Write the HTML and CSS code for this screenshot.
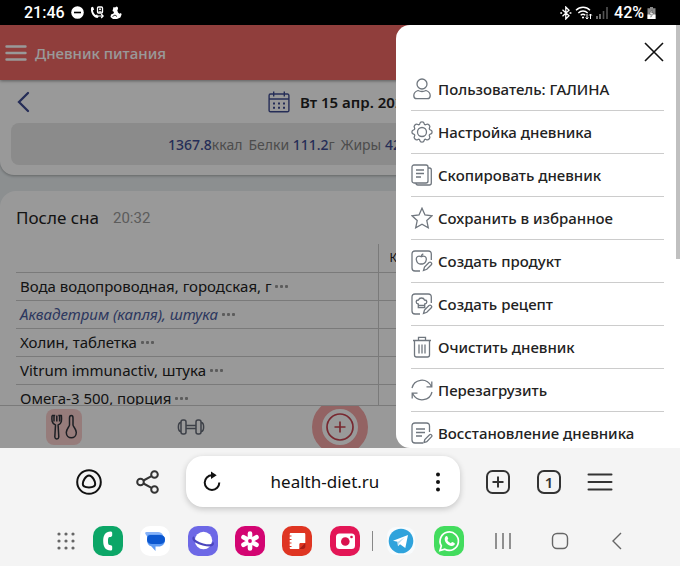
FILE: index.html
```html
<!DOCTYPE html>
<html lang="ru">
  <head>
    <meta charset="UTF-8" />
    <meta name="viewport" content="width=device-width, initial-scale=1.0" />
    <title>Дневник питания</title>
    <link rel="stylesheet" href="styles.css">
  </head>
  <body>
    <div class="status-bar">
      <div class="status-group">
        <span>21:46</span>
        <svg width="13" height="13" viewBox="0 0 13 13"><circle cx="6.500" cy="6.500" r="6.300" fill="#fff" /><path d="M3 6.500h7" stroke="#000" stroke-width="1.600" /></svg>
        <svg width="14" height="13" viewBox="0 0 14 13"><path d="M1.300 1.200 3 .7l1.200 2.700-1.300 1.200c.4 1.800 1.200 3.200 2.600 4.400l1.600-.6 1.600 2.300-1.200 1.400C3.300 11.700-.2 6 1.300 1.200z" fill="#fff" /><rect x="7.500" y="1" width="5" height="6" rx="1" fill="none" stroke="#fff" stroke-width="1.300" /><circle cx="10" cy="3.300" r="1" fill="#fff" /><path d="M8.500 5.800h3M8 10h5M11.200 8l2 2-2 2" fill="none" stroke="#fff" stroke-width="1.200" /></svg>
        <svg width="12" height="13" viewBox="0 0 12 13"><path d="M3.500 1 5 1.500 6.500.5C8.300.8 8.500 3 7.300 4.300L8 6.500l1.500 1.300L11 7l.6 1.500-1.200 3L7 13H3L.5 11 1 8.500l2.500-1L4 6 2.500 5z" fill="#fff" /><path d="M2.500 10.500 5 9l2 1.500" fill="none" stroke="#000" stroke-width=".8" /></svg>
      </div>
      <div class="status-group status-right">
        <svg width="12" height="14" viewBox="0 0 12 14"><path d="M2.500 3.800l6.500 6L5.800 13V1L9 4.200l-6.500 6M.3 7h1.800M9.600 7h1.800" fill="none" stroke="#fff" stroke-width="1.300" /></svg>
        <svg width="18" height="14" viewBox="0 0 18 14"><path d="M1 4.300c4-4 10.200-4 14 0M3.300 6.900c2.700-2.600 6.700-2.600 9.400 0M5.700 9.300c1.400-1.200 3.200-1.200 4.600 0" fill="none" stroke="#fff" stroke-width="1.400" /><circle cx="8" cy="11.500" r="1.100" fill="#fff" /><path d="M12 8v5M10.700 11.500 12 13l1.300-1.500M15.500 13V8M14.200 9.500 15.500 8l1.300 1.500" fill="none" stroke="#fff" stroke-width="1" /></svg>
        <svg width="12" height="12" viewBox="0 0 12 12"><path d="M1 9v3M4 7v5" stroke="#888" stroke-width="1.600" /><path d="M7.500 4v8M11 0v12" stroke="#555" stroke-width="1.600" /></svg>
        <span class="battery-value">42%</span>
        <svg width="9" height="12" viewBox="0 0 9 12"><path d="M3 0h3v1.200h2.500V12h-8V1.200H3z" fill="#888" /><path d="M.5 7.500h8V12h-8z" fill="#fff" /><path d="M5 2.800 2.300 7h2L3.800 10.200 6.700 6h-2z" fill="#fff" stroke="#333" stroke-width=".4" /></svg>
      </div>
    </div>

    <main class="app">
      <header class="app-header">
        <button class="icon-button" aria-label="Меню">
          <svg width="22" height="18" viewBox="0 0 22 18"><path d="M1.500 2.500h19M1.500 9h19M1.500 15.500h19" stroke="#fff" stroke-width="2.400" stroke-linecap="round" /></svg>
        </button>
        <h1>Дневник питания</h1>
      </header>

      <section class="day-card">
        <div class="day-row">
          <button class="icon-button day-prev" aria-label="Предыдущий день">
            <svg width="14" height="22" viewBox="0 0 14 22"><path d="M12 2 3 11l9 9" fill="none" stroke="#3f4c92" stroke-width="2.300" stroke-linecap="round" /></svg>
          </button>
          <button class="icon-button day-current">
            <svg width="22" height="22" viewBox="0 0 22 22"><path d="M2.500 3h17a1.400 1.400 0 0 1 1.400 1.400v15a1.400 1.400 0 0 1-1.400 1.400h-17a1.400 1.400 0 0 1-1.400-1.400v-15A1.400 1.400 0 0 1 2.500 3zM1 8h20M5.700.5v5M16.300.5v5" fill="none" stroke="#3f4c92" stroke-width="1.400" /><path d="M5 12.500h2m3 0h2m3 0h2M5 16.700h2m3 0h2m3 0h2" stroke="#3f4c92" stroke-width="1.900" /></svg>
            <span>Вт 15 апр. 2025</span>
          </button>
        </div>
        <p class="summary">
          <span><b>1367.8</b>ккал</span>
          <span>Белки <b>111.2</b>г</span>
          <span>Жиры <b>42</b>г</span>
        </p>
      </section>

      <section class="meal-card">
        <div class="meal-head">
          <h2>После сна</h2>
          <time>20:32</time>
        </div>
        <table class="foods">
          <thead>
            <tr><th></th><th class="value">Ккал</th></tr>
          </thead>
          <tbody>
            <tr><td>Вода водопроводная, городская, г <button class="more" aria-label="Ещё"><i></i><i></i><i></i></button></td><td></td></tr>
            <tr><td><em>Аквадетрим (капля), штука</em> <button class="more" aria-label="Ещё"><i></i><i></i><i></i></button></td><td></td></tr>
            <tr><td>Холин, таблетка <button class="more" aria-label="Ещё"><i></i><i></i><i></i></button></td><td></td></tr>
            <tr><td>Vitrum immunactiv, штука <button class="more" aria-label="Ещё"><i></i><i></i><i></i></button></td><td></td></tr>
            <tr><td>Омега-3 500, порция <button class="more" aria-label="Ещё"><i></i><i></i><i></i></button></td><td></td></tr>
          </tbody>
        </table>
      </section>

      <nav class="tabs">
        <button class="tab" aria-label="Питание">
          <span class="tab-active">
            <svg width="28" height="28" viewBox="0 0 28 28" fill="none" stroke="#30343c" stroke-width="1.500" stroke-linejoin="round"><path d="M2 2.500h2v6M2 2.500c-.4 5-.3 8 3.500 9.500l-.7 12c.3 2.500 3.700 2.500 4 0l-.7-12c3.800-1.500 3.700-4.500 3.300-9.500H9.600v6M6.800 2.500v6M4 2.500h1.200M8.300 2.500h1.300" /><path d="M19.500 12V5c0-3.200 3.500-3.200 3.500 0v7c0 1.500 3.300 4 3.300 7.500 0 7-10 7-10 0 0-3.500 3.200-6 3.200-7.500z" /></svg>
          </span>
        </button>
        <button class="tab" aria-label="Тренировки">
          <svg width="28" height="18" viewBox="0 0 28 18" fill="none" stroke="#666c78" stroke-width="1.500"><rect x="4" y="2" width="5" height="14" rx="2" /><rect x="19" y="2" width="5" height="14" rx="2" /><path d="M4 4.500c-3.500 0-3.500 9 0 9M24 4.500c3.500 0 3.500 9 0 9M9 7.500h10M9 10.500h10" /></svg>
        </button>
        <button class="tab tab-center" aria-label="Добавить">
          <span class="tab-add">
            <svg width="28" height="28" viewBox="0 0 28 28" fill="none" stroke="#c84450" stroke-width="1.700"><circle cx="14" cy="14" r="13" /><path d="M14 8.500v11M8.500 14h11" /></svg>
          </span>
        </button>
        <span class="tab"></span>
        <span class="tab"></span>
      </nav>

      <div class="overlay"></div>

      <aside class="drawer">
        <div class="drawer-head">
          <button class="icon-button" aria-label="Закрыть">
            <svg width="20" height="20" viewBox="0 0 20 20"><path d="M1 1l18 18M19 1 1 19" stroke="#111" stroke-width="1.600" /></svg>
          </button>
        </div>
        <ul class="menu">
          <li><button>
            <svg viewBox="0 0 22 22"><circle cx="11" cy="6" r="5" /><path d="M7 12.500c-2.600.8-4.200 2.700-4.200 5.200 0 2 1.200 3 3 3h10.400c1.800 0 3-1 3-3 0-2.500-1.600-4.400-4.200-5.200-2.600 1.300-5.400 1.300-8 0z" /></svg>
            Пользователь: ГАЛИНА</button></li>
          <li><button>
            <svg viewBox="0 0 22 22"><circle cx="11" cy="11" r="4.500" /><path d="M8.800 2.700C9.200.3 12.800.3 13.200 2.700c.2 1 1 1.300 1.900.8 2.100-1.300 4.700 1.300 3.400 3.400-.5.900-.2 1.700.8 1.900 2.400.4 2.400 4 0 4.400-1 .2-1.300 1-.8 1.900 1.300 2.100-1.300 4.700-3.400 3.400-.9-.5-1.700-.2-1.900.8-.4 2.400-4 2.400-4.400 0-.2-1-1-1.300-1.900-.8-2.100 1.300-4.700-1.300-3.400-3.400.5-.9.200-1.700-.8-1.900-2.400-.4-2.400-4 0-4.400 1-.2 1.300-1 .8-1.900C2.200 4.800 4.800 2.200 6.900 3.500c.9.500 1.700.2 1.900-.8z" /></svg>
            Настройка дневника</button></li>
          <li><button>
            <svg viewBox="0 0 22 22"><rect x="1" y="1" width="16" height="18" rx="2" /><path d="M17 4h1.500C19.600 4 20.300 4.700 20.300 6v13c0 1.200-.7 2-2 2H7c-1.300 0-2-.7-2-2M5 6h8M5 9.500h8M5 13h5" /></svg>
            Скопировать дневник</button></li>
          <li><button>
            <svg viewBox="0 0 22 22"><path d="M11 1.200l3 6.800 7 .8-5.200 4.800 1.500 7.200L11 17.300l-6.300 3.500 1.500-7.200L1 8.800 8 8z" /></svg>
            Сохранить в избранное</button></li>
          <li><button>
            <svg viewBox="0 0 22 22"><path d="M20.300 10V4c0-2-1-3-3-3H4C2 1 1 2 1 4v14c0 2 1 3 3 3h5" /><path d="M10.300 6.800C7.500 5 5 6.800 5.300 9.500c.3 3 2.400 5.200 5 4.300 2.600.8 4.700-1.300 5-4.300.3-2.700-2.200-4.500-5-2.700zm0 0c0-1.600.7-2.500 2-3M12.500 20.500l1-3.500 4.500-4.500c1.500-1.200 3.500.8 2.300 2.300L15.800 19.300z" /></svg>
            Создать продукт</button></li>
          <li><button>
            <svg viewBox="0 0 22 22"><path d="M20.300 10V4c0-2-1-3-3-3H4C2 1 1 2 1 4v14c0 2 1 3 3 3h5" /><path d="M7.300 14.500V11C4.500 10.500 4.500 7 7.500 7c.8-2.700 5.200-2.700 6 0 3 0 3 3.500.2 4v3.500zm0-2.200h6.400M12.500 20.500l1-3.500 4.500-4.500c1.500-1.200 3.500.8 2.300 2.300L15.800 19.300z" /></svg>
            Создать рецепт</button></li>
          <li><button>
            <svg viewBox="0 0 22 22"><path d="M2 4.500h18M7.500 4.500V1.300h7v3.200M3.500 4.500V19c0 1.300.7 2 2 2h11c1.300 0 2-.7 2-2V4.500M8 8.500v9M11 8.500v9M14 8.500v9" /></svg>
            Очистить дневник</button></li>
          <li><button>
            <svg viewBox="0 0 22 22"><path d="M1 9C3 .5 15-2.500 20.500 7.500M20.800 2.500v5.300h-5.300M21 13c-2 8.500-14 11.500-19.500 1.500M1.200 19.500v-5.300h5.300" /></svg>
            Перезагрузить</button></li>
          <li><button>
            <svg viewBox="0 0 22 22"><path d="M18.500 10V4c0-2-1-3-3-3H4C2 1 1 2 1 4v14c0 2 1 3 3 3h8M5 7h9M5 10.500h9M5 14h6" /><path d="M13 20.500l.8-3 4.800-4.800c1.300-1 3 .7 2 2L15.800 19.700z" /></svg>
            Восстановление дневника</button></li>
        </ul>
        <span class="scroll-thumb"></span>
      </aside>
    </main>

    <footer class="browser">
      <div class="toolbar">
        <div class="tool-group tools-left">
          <button class="icon-button" aria-label="Алиса"><svg width="28" height="28" viewBox="0 0 28 28" fill="none" stroke="#111" stroke-width="2"><circle cx="14" cy="14" r="11.800" /><path d="M14 7.500c3.300 0 6.200 5.500 6.200 8.500 0 2.400-2.600 3.400-6.200 3.400S7.800 18.400 7.800 16c0-3 2.900-8.500 6.200-8.500z" /></svg></button>
          <button class="icon-button" aria-label="Поделиться"><svg width="28" height="28" viewBox="0 0 28 28" fill="none" stroke="#333" stroke-width="2"><circle cx="6.500" cy="14" r="3.300" /><circle cx="20.500" cy="6.500" r="3.300" /><circle cx="20.500" cy="21.500" r="3.300" /><path d="M9.500 12.500l8-4.400M9.500 15.500l8 4.400" /></svg></button>
        </div>
        <div class="address">
          <button class="icon-button" aria-label="Обновить"><svg width="28" height="28" viewBox="0 0 28 28"><path d="M14 7.300a7.300 7.300 0 1 0 7.300 7.300" fill="none" stroke="#111" stroke-width="2" /><path d="M13 3.500l5.700 3.800L13 11z" fill="#111" /></svg></button>
          <input type="text" value="health-diet.ru" aria-label="Адрес сайта">
          <button class="icon-button" aria-label="Ещё"><svg width="28" height="28" viewBox="0 0 28 28" fill="#111"><circle cx="14" cy="6.500" r="2" /><circle cx="14" cy="14" r="2" /><circle cx="14" cy="21.500" r="2" /></svg></button>
        </div>
        <div class="tool-group tools-right">
          <button class="icon-button" aria-label="Новая вкладка"><svg width="28" height="28" viewBox="0 0 28 28" fill="none" stroke="#333" stroke-width="2"><rect x="3" y="3" width="22" height="22" rx="5.500" /><path d="M14 8.500v11M8.500 14h11" /></svg></button>
          <button class="icon-button"><span class="tab-count">1</span></button>
          <button class="icon-button" aria-label="Меню браузера"><svg width="28" height="28" viewBox="0 0 28 28"><path d="M2.500 6.500h23M2.500 14h23M2.500 21.500h23" stroke="#333" stroke-width="2" stroke-linecap="round" /></svg></button>
        </div>
      </div>

      <div class="dock">
        <button class="icon-button dock-grid" aria-label="Все приложения"><svg width="18" height="18" viewBox="0 0 18 18"><path d="M2 2h0M9 2h0M16 2h0M2 9h0M9 9h0M16 9h0M2 16h0M9 16h0M16 16h0" stroke="#666" stroke-width="3.200" stroke-linecap="round" /></svg></button>
        <div class="dock-apps">
          <button class="icon-button" aria-label="Телефон"><svg width="30" height="30" viewBox="0 0 30 30"><rect width="30" height="30" rx="10" fill="#0ca667" /><path d="M17.500 5.500c1 0 1.700.5 1.700 1.500v2.200c0 1.300-1 1.700-2.500 1.800-1.500.2-1.700 1.500-1.700 4s.2 3.800 1.700 4c1.500.1 2.500.5 2.500 1.800V23c0 1-.7 1.500-1.700 1.500-5 0-7.300-3.800-7.300-9.500s2.300-9.500 7.300-9.500z" fill="#fff" /></svg></button>
          <button class="icon-button" aria-label="Сообщения"><svg width="30" height="30" viewBox="0 0 30 30"><rect width="30" height="30" rx="10" fill="#fff" /><path d="M6.500 6H18c2.500 0 4.500 1.500 5 3.500L8 12 5.300 7.800C4.800 6.800 5.400 6 6.500 6z" fill="#86b2f8" /><path d="M7 11c0-2 1-2.500 3-2.500h9c4 0 6 2 6 5.500 0 4-2.500 6.500-6.500 6.500H15.500V25l-4.300-4.700C8.200 19.500 7 17 7 14z" fill="#5e9bf3" /><path d="M10.500 9H20c3 0 5 1.700 5 4.500s-2 4.500-5 4.500h-8c-3 0-5-1.700-5-4.500C7 11 8 9 10.500 9z" fill="#0b57d0" /></svg></button>
          <button class="icon-button" aria-label="Интернет"><svg width="30" height="30" viewBox="0 0 30 30"><rect width="30" height="30" rx="10" fill="#6d68e6" /><circle cx="15.500" cy="14.500" r="8.700" fill="#fff" /><path d="M6 11c-3 3 5 6.500 9 7.500s11 2 9.700-2" fill="none" stroke="#4a45bd" stroke-width="2.200" /></svg></button>
          <button class="icon-button" aria-label="Галерея"><svg width="30" height="30" viewBox="0 0 30 30"><rect width="30" height="30" rx="10" fill="#d30572" /><g stroke="#fff" stroke-width="4.600" stroke-linecap="round"><path d="M15 7.500v4M15 18.500v4M8.500 11.200l3.500 2M18 16.800l3.500 2M8.500 18.800l3.500-2M18 13.200l3.500-2" /></g><circle cx="15" cy="15" r="4" fill="#fff" /><circle cx="15" cy="15" r="1.900" fill="#d30572" /></svg></button>
          <button class="icon-button" aria-label="Заметки"><svg width="30" height="30" viewBox="0 0 30 30"><rect width="30" height="30" rx="10" fill="#df3522" /><path d="M9 7h13c.8 0 1.300.5 1.300 1.300V17h-4.500c-1 0-1.500.5-1.500 1.500V23H9c-.8 0-1.300-.5-1.300-1.300V8.300C7.700 7.500 8.200 7 9 7z" fill="#fff" /><path d="M17.300 23l6-6v3.500c0 1.500-1 2.500-2.500 2.500z" fill="#a71c17" /><path d="M6.500 10h3M6.500 13.500h3M6.500 17h3M6.500 20.500h3" stroke="#df3522" stroke-width="1.100" /></svg></button>
          <button class="icon-button" aria-label="Камера"><svg width="30" height="30" viewBox="0 0 30 30"><rect width="30" height="30" rx="10" fill="#e31656" /><rect x="6" y="7.500" width="19" height="15.500" rx="3.500" fill="#fff" /><circle cx="15.300" cy="15.500" r="4.300" fill="#d9134f" /><circle cx="21.500" cy="11" r="1.300" fill="#d9134f" /></svg></button>
        </div>
        <span class="dock-divider"></span>
        <div class="dock-recent">
          <button class="icon-button" aria-label="Telegram"><svg width="30" height="30" viewBox="0 0 30 30"><rect x="1" y="1" width="28" height="28" rx="9" fill="#f8fbfd" /><circle cx="15" cy="15" r="12.300" fill="#2fa3dc" /><path d="M7 14.800 22 9l-2.700 13-5.300-3.700-2 2-.5-4.500z" fill="#fff" /><path d="M11.500 16l7-4.500-5.500 5.700-1 3z" fill="#b9dcf0" /></svg></button>
          <button class="icon-button" aria-label="WhatsApp"><svg width="30" height="30" viewBox="0 0 30 30"><rect width="30" height="30" rx="10" fill="#43dc5e" /><path d="M6 24.500l1.300-4.700a9.200 9.200 0 1 1 3.500 3.400z" fill="none" stroke="#fff" stroke-width="1.700" /><path d="M11.500 10.500c.5-.7 1.500-.8 1.900 0l.8 1.900c.1.600-.7 1.200-.9 1.700.8 1.500 2 2.500 3.500 3.100.6-.3 1-1.200 1.600-1.100l2 1c.7.400.4 1.300-.1 1.900-4 4-12.300-4-8.800-8.500z" fill="#fff" /></svg></button>
        </div>
        <div class="dock-nav">
          <button class="icon-button" aria-label="Недавние"><svg width="18" height="18" viewBox="0 0 18 18"><path d="M2 1v16M9 1v16M16 1v16" stroke="#666" stroke-width="1.400" /></svg></button>
          <button class="icon-button" aria-label="Домой"><svg width="18" height="18" viewBox="0 0 18 18"><rect x="1.500" y="1.500" width="15" height="15" rx="4.500" fill="none" stroke="#666" stroke-width="1.400" /></svg></button>
          <button class="icon-button" aria-label="Назад"><svg width="18" height="18" viewBox="0 0 18 18"><path d="M13 1 5 9l8 8" fill="none" stroke="#666" stroke-width="1.400" /></svg></button>
        </div>
      </div>
    </footer>
  </body>
</html>
```

FILE: styles.css
```css
:root {
  --primary-color: #f16864;
  --accent-color: #3f4c92;
  --page-color: #e9eff1;
  --line-color: #cccccc;
  --icon-color: #70777f;
}

* {
  box-sizing: border-box;
}

body {
  margin: 0;
  height: 100vh;
  display: flex;
  flex-direction: column;
  overflow: hidden;
  font-family: "Noto Sans", "Open Sans", sans-serif;
  font-size: 14px;
  color: #222;
}

h1,
h2,
p,
ul {
  margin: 0;
  padding: 0;
}

button {
  font-family: inherit;
  color: inherit;
  cursor: pointer;
}

.icon-button {
  display: flex;
  align-items: center;
  justify-content: center;
  padding: 0;
  border: none;
  background: none;
}

/* Status bar */
.status-bar {
  display: flex;
  justify-content: space-between;
  align-items: center;
  flex-shrink: 0;
  height: 25px;
  padding: 0 24px;
  background-color: #000;
  color: #fff;
  font-family: Roboto, sans-serif;
  font-size: 16px;
  font-weight: 500;
}

.status-group {
  display: flex;
  align-items: center;
  gap: 6px;
}

.status-right {
  gap: 3px;
}

.battery-value {
  margin-left: 3px;
}

/* App */
.app {
  position: relative;
  flex: 1;
  min-height: 0;
  display: flex;
  flex-direction: column;
  overflow: hidden;
  background-color: var(--page-color);
}

.app-header {
  display: flex;
  align-items: center;
  flex-shrink: 0;
  gap: 8px;
  height: 55px;
  padding: 0 5px;
  background-color: var(--primary-color);
  color: #fff;
  box-shadow: 0 1px 3px rgba(0, 0, 0, 0.4);
  z-index: 1;
}

.app-header h1 {
  font-size: 15px;
  font-weight: 500;
}

.day-card {
  flex-shrink: 0;
  padding: 0 11px 10px;
  background-color: #fff;
  border-radius: 0 0 14px 14px;
  box-shadow: 0 1px 3px rgba(0, 0, 0, 0.3);
}

.day-row {
  display: grid;
  grid-template-columns: 24px 1fr 24px;
  align-items: center;
  height: 43px;
}

.day-current {
  gap: 10px;
  font-size: 15px;
  font-weight: 600;
}

.summary {
  display: flex;
  align-items: center;
  gap: 6px;
  height: 42px;
  padding-left: 157px;
  background-color: #e8e8e8;
  border-radius: 8px;
  color: #808080;
}

.summary b {
  color: var(--accent-color);
  font-weight: 500;
}

.meal-card {
  flex: 1;
  min-height: 0;
  overflow: hidden;
  margin-top: 16px;
  padding: 0 16px;
  background-color: #fff;
  border-radius: 16px 16px 0 0;
}

.meal-head {
  display: flex;
  align-items: center;
  gap: 14px;
  height: 53px;
}

.meal-head h2 {
  font-size: 17px;
  font-weight: 400;
}

.meal-head time {
  font-family: Roboto, sans-serif;
  font-size: 15px;
  color: #999;
}

.foods {
  width: 100%;
  border-collapse: collapse;
  table-layout: fixed;
  font-size: 15px;
}

.foods th,
.foods td {
  height: 28px;
  padding: 0 4px;
  border-bottom: 1px solid var(--line-color);
  line-height: 20px;
  text-align: left;
  white-space: nowrap;
}

.foods th:first-child,
.foods td:first-child {
  width: 56%;
  border-right: 1px solid var(--line-color);
}

.foods .value {
  padding-left: 10px;
  font-size: 12px;
  font-weight: 400;
}

.foods em {
  color: #4b5c9e;
}

.more {
  display: inline-flex;
  gap: 2px;
  height: 6px;
  padding: 0;
  border: none;
  background: none;
  vertical-align: middle;
}

.more i {
  width: 3px;
  height: 3px;
  border-radius: 1px;
  background-color: #999;
}

.tabs {
  display: flex;
  flex-shrink: 0;
  height: 43px;
  background-color: #fff;
  border-top: 1px solid var(--line-color);
  overflow: hidden;
}

.tab {
  flex: 3;
  display: flex;
  align-items: center;
  justify-content: center;
  padding: 0;
  border: none;
  background: none;
}

.tab-center {
  flex: 4;
}

.tab-active,
.tab-add {
  display: flex;
  align-items: center;
  justify-content: center;
  flex-shrink: 0;
}

.tab-active {
  width: 36px;
  height: 36px;
  border-radius: 8px;
  background-color: #fbcfcd;
}

.tab-add {
  width: 56px;
  height: 56px;
  border: 10px solid #f5a5a5;
  border-radius: 50%;
}

.overlay {
  position: absolute;
  inset: 0;
  background-color: rgba(0, 0, 0, 0.4);
  z-index: 2;
}

/* Drawer */
.drawer {
  position: absolute;
  top: 0;
  right: 0;
  bottom: 0;
  width: 284px;
  padding: 0 16px 0 15px;
  overflow: hidden;
  background-color: #fff;
  border-radius: 14px 0 0 14px;
  z-index: 3;
}

.drawer-head {
  display: flex;
  justify-content: flex-end;
  align-items: flex-end;
  height: 43px;
  padding-bottom: 6px;
}

.menu {
  list-style: none;
}

.menu li {
  border-bottom: 1px solid var(--line-color);
}

.menu button {
  display: flex;
  align-items: center;
  gap: 5px;
  width: 100%;
  height: 42px;
  padding: 0;
  border: none;
  background: none;
  font-size: 15px;
  font-weight: 500;
  white-space: nowrap;
}

.menu svg {
  flex-shrink: 0;
  width: 22px;
  height: 22px;
  fill: none;
  stroke: var(--icon-color);
  stroke-width: 1.3;
}

.scroll-thumb {
  position: absolute;
  top: 0;
  right: 0;
  width: 4px;
  height: 234px;
  background-color: #c0c0c0;
}

/* Browser panel */
.browser {
  flex-shrink: 0;
  padding-top: 8px;
  background-color: #f4f4f4;
}

.toolbar {
  display: flex;
  align-items: center;
  gap: 24px;
  padding: 0 66px 0 75px;
}

.tool-group {
  display: flex;
}

.tools-left {
  gap: 31px;
}

.tools-right {
  gap: 23px;
}

.address {
  flex: 1;
  min-width: 0;
  display: flex;
  align-items: center;
  height: 51px;
  padding: 0 8px 0 12px;
  background-color: #fff;
  border-radius: 17px;
  box-shadow: 0 2px 6px rgba(0, 0, 0, 0.2);
}

.address input {
  flex: 1;
  min-width: 0;
  padding: 0;
  border: none;
  outline: none;
  background: none;
  font-family: inherit;
  font-size: 17px;
  color: #111;
  text-align: center;
}

.tab-count {
  display: flex;
  align-items: center;
  justify-content: center;
  width: 24px;
  height: 24px;
  margin: 0 2px;
  border: 2px solid #333;
  border-radius: 7px;
  font-size: 15px;
  font-weight: 600;
  line-height: 20px;
  color: #333;
}

.dock {
  display: flex;
  align-items: center;
  height: 59px;
  padding: 8px 35px 0 47px;
}

.dock-grid {
  width: 37px;
}

.dock-apps,
.dock-recent,
.dock-nav {
  display: flex;
}

.dock-apps .icon-button,
.dock-recent .icon-button,
.dock-nav .icon-button {
  flex: 1;
}

.dock-apps {
  flex: 6;
}

.dock-recent {
  flex: 2;
}

.dock-nav {
  flex: 3.6;
  margin-left: 2px;
}

.dock-divider {
  width: 1px;
  height: 20px;
  margin: 0 4px;
  background-color: #888;
}
```
